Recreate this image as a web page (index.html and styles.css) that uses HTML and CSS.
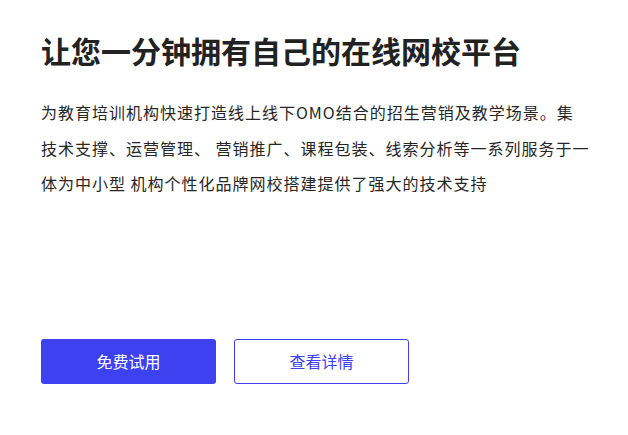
FILE: index.html
```html
<!DOCTYPE html>
<html lang="zh-CN">
<head>
<meta charset="utf-8"/>
<meta name="viewport" content="width=device-width, initial-scale=1.0"/>
<title>在线网校平台</title>
<link rel="stylesheet" href="styles.css">
</head>
<body>
  <div class="hero">
    <h1 class="hero-title">让您一分钟拥有自己的在线网校平台</h1>
    <p class="hero-desc">为教育培训机构快速打造线上线下OMO结合的招生营销及教学场景。集<br>技术支撑、运营管理、 营销推广、课程包装、线索分析等一系列服务于一<br>体为中小型 机构个性化品牌网校搭建提供了强大的技术支持</p>
    <div class="hero-actions">
      <a class="btn btn-primary" href="#">免费试用</a>
      <a class="btn btn-outline" href="#">查看详情</a>
    </div>
  </div>
</body>
</html>
```

FILE: styles.css
```css
body {
  margin: 0;
  background: #fff;
  font-family: "Noto Sans CJK SC", "Noto Sans", sans-serif;
  color: #333;
}
.hero {
  padding: 29px 41px 32px;
}
.hero-title {
  margin: 0;
  font-size: 30px;
  line-height: 42px;
  font-weight: bold;
  color: #222;
}
.hero-desc {
  margin: 24px 0 0;
  font-size: 16px;
  line-height: 35.5px;
  letter-spacing: 1px;
  white-space: nowrap;
  color: #262626;
}
.hero-actions {
  display: flex;
  gap: 18px;
  margin-top: 137px;
}
.btn {
  display: flex;
  align-items: center;
  justify-content: center;
  width: 175px;
  height: 45px;
  box-sizing: border-box;
  border-radius: 3px;
  font-size: 16px;
  text-decoration: none;
}
.btn-primary {
  background: #3d41ef;
  color: #fff;
}
.btn-outline {
  border: 1px solid #3d41ef;
  color: #3d41ef;
}
```
